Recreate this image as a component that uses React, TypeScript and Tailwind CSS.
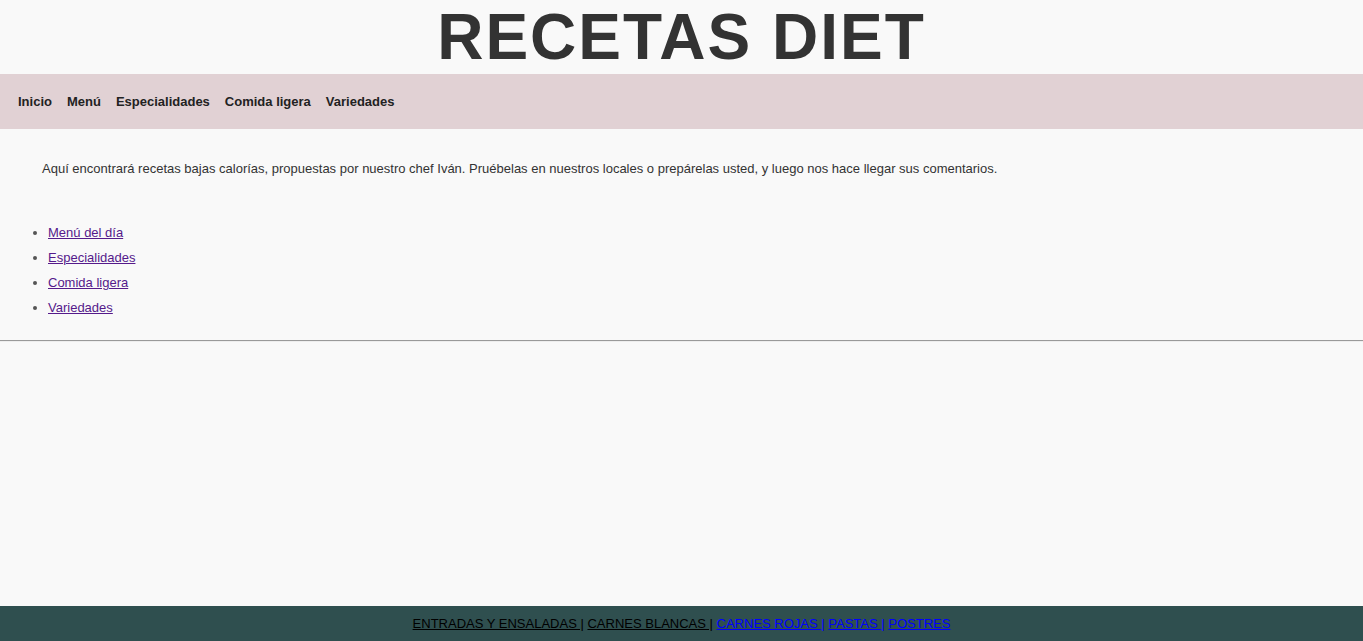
const nav = ['Inicio', 'Menú', 'Especialidades', 'Comida ligera', 'Variedades'];
const recipes = ['Menú del día', 'Especialidades', 'Comida ligera', 'Variedades'];

export default function App() {
  return (
    <div className="flex min-h-screen flex-col bg-[#f9f9f9] font-['Liberation_Sans',Arial,sans-serif] text-[13px] leading-[25px] text-[#333]">
      <header>
        <h1 className="text-center text-[64px] leading-[74px] font-bold tracking-[2px]">RECETAS DIET</h1>
        <nav className="flex flex-wrap gap-x-[15px] bg-[#e1d1d4] px-[18px] py-[15px] font-bold text-[#222]">
          {nav.map((label) => (
            <a key={label} href="#">{label}</a>
          ))}
        </nav>
      </header>
      <main className="grow">
        <p className="px-[42px] pt-[27px]">
          Aquí encontrará recetas bajas calorías, propuestas por nuestro chef Iván. Pruébelas en nuestros locales o prepárelas usted, y luego nos hace llegar sus comentarios.
        </p>
        <ul className="mt-[39px] list-disc pl-[48px] marker:text-[#555]">
          {recipes.map((label) => (
            <li key={label}>
              <a href="#" className="text-[#551a8b] underline">{label}</a>
            </li>
          ))}
        </ul>
        <hr className="mt-5 border-t border-b border-t-[#9a9a9a] border-b-[#eee]" />
      </main>
      <footer className="bg-[#2f4f4f] py-[5px] text-center text-[#0000ff]">
        <a href="#" className="text-black underline">ENTRADAS Y ENSALADAS |</a>{' '}
        <a href="#" className="text-black underline">CARNES BLANCAS |</a>{' '}
        <a href="#" className="underline">CARNES ROJAS |</a>{' '}
        <a href="#" className="underline">PASTAS |</a>{' '}
        <a href="#" className="underline">POSTRES</a>
      </footer>
    </div>
  );
}
